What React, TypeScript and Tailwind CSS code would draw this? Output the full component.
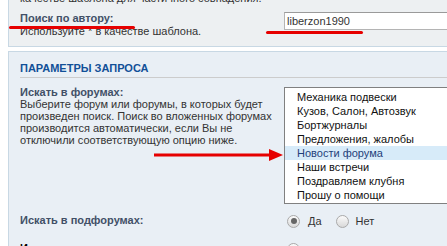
import React from 'react'

const forums = [
  'Механика подвески',
  'Кузов, Салон, Автозвук',
  'Бортжурналы',
  'Предложения, жалобы',
  'Новости форума',
  'Наши встречи',
  'Поздравляем клубня',
  'Прошу о помощи',
]

function Radio({ checked }: { checked?: boolean }) {
  return (
    <span className="w-[13px] h-[13px] rounded-full border border-[#a9a9a9] bg-gradient-to-b from-[#fbfbfb] to-[#d9d9d9] flex items-center justify-center shrink-0">
      {checked && <span className="w-[6px] h-[6px] rounded-full bg-[#666]" />}
    </span>
  )
}

export default function App() {
  return (
    <div className="relative w-[447px] h-[246px] overflow-hidden bg-white text-[11px] text-[#333] font-['Liberation_Sans',Arial,sans-serif]">
      <div className="pl-[8px] w-[470px]">
        {/* author panel */}
        <div className="mt-[-20px] border border-[#c8d8e4] bg-[#edf0f2] pl-[11px] pt-[11px] pb-[8px]">
          <div className="leading-[12px]">качестве шаблона для частичного совпадения.</div>
          <div className="flex mt-[8px]">
            <div className="w-[264px] shrink-0">
              <div className="font-bold text-[#425067] leading-[13px]">Поиск по автору:</div>
              <div className="leading-[13px]">Используйте * в качестве шаблона.</div>
            </div>
            <div className="h-[18px] flex-1 border border-[#b4b4b4] border-t-[#9a9a9a] bg-white pl-[2px] leading-[16px] text-[#333]">
              liberzon1990
            </div>
          </div>
        </div>

        {/* query params panel */}
        <div className="mt-[4px] border border-[#c8d8e4] bg-[#e9eff5] pl-[11px] pt-[10px] h-[300px]">
          <div className="font-bold uppercase text-[#115098] leading-[13px] pb-[2px] border-b border-[#cccccc]">Параметры запроса</div>
          <div className="flex mt-[8px]">
            <div className="w-[264px] shrink-0 leading-[12px]">
              <div className="font-bold text-[#425067]">Искать в форумах:</div>
              <div>
                Выберите форум или форумы, в которых будет<br />
                произведен поиск. Поиск во вложенных форумах<br />
                производится автоматически, если Вы не<br />
                отключили соответствующую опцию ниже.
              </div>
            </div>
            <div className="mt-[1px] flex-1 h-[117px] border border-[#808080] bg-white pt-[2px] text-[#111]">
              {forums.map(f => (
                <div key={f} className={`h-[14px] leading-[14px] pl-[12px] ${f === 'Новости форума' ? 'bg-[#d7ebf9] text-[#1f3f7a]' : ''}`}>
                  {f}
                </div>
              ))}
            </div>
          </div>
          <div className="flex mt-[6px] items-center">
            <div className="w-[264px] shrink-0 font-bold text-[#425067] leading-[12px]">Искать в подфорумах:</div>
            <div className="flex items-center pl-[3px] mt-[3px] text-[#333]">
              <Radio checked />
              <span className="ml-[8px]">Да</span>
              <span className="ml-[14px]"><Radio /></span>
              <span className="ml-[7px]">Нет</span>
            </div>
          </div>
          <div className="flex mt-[9px] items-center">
            <div className="w-[264px] shrink-0 font-bold text-[#000] leading-[12px]">Искать:</div>
            <div className="flex items-center pl-[3px] mt-[3px]">
              <Radio checked />
              <span className="ml-[8px]">В</span>
            </div>
          </div>
        </div>
      </div>

      {/* annotations */}
      <div className="absolute left-[9px] top-[26px] w-[126px] h-[3px] bg-[#e60000] rounded-full" />
      <div className="absolute left-[266px] top-[31px] w-[97px] h-[3px] bg-[#e60000] rounded-full" />
      <svg className="absolute left-[154px] top-[148px]" width="130" height="14" viewBox="0 0 130 14">
        <rect x="0" y="5.5" width="118" height="3" fill="#e60000" />
        <polygon points="115,1 129,7 115,13" fill="#e60000" />
      </svg>
    </div>
  )
}
